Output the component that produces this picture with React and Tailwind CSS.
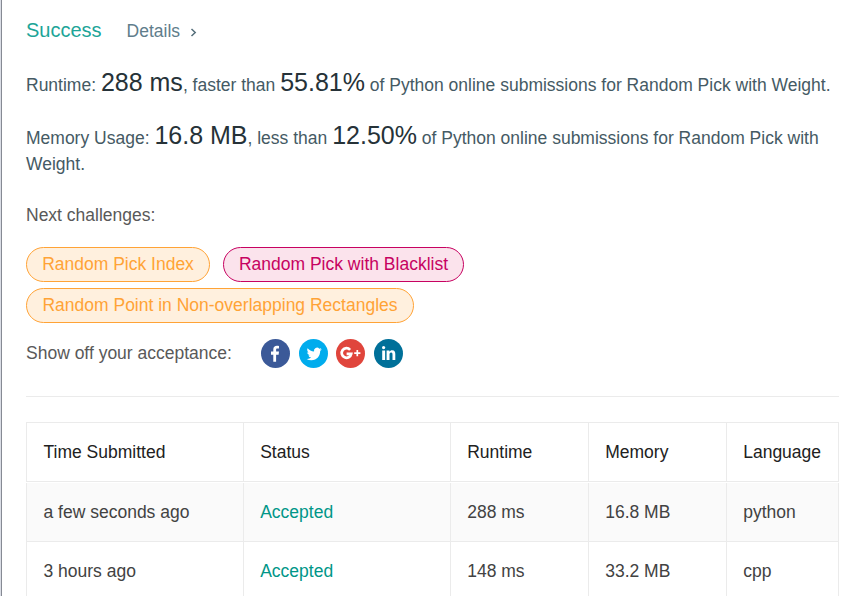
const challenges = [
  [
    { name: 'Random Pick Index', tone: 'w-[184px] border-[#ffa336] bg-[#fff0de] text-[#ffa336]' },
    { name: 'Random Pick with Blacklist', tone: 'w-[241px] border-[#c70261] bg-[#fbe3ec] text-[#c70261]' },
  ],
  [
    { name: 'Random Point in Non-overlapping Rectangles', tone: 'w-[388px] border-[#ffa336] bg-[#fff0de] text-[#ffa336]' },
  ],
];

const rows = [
  { time: 'a few seconds ago', runtime: '288 ms', memory: '16.8 MB', language: 'python', style: 'h-[59px] mt-px bg-[#fafafa]' },
  { time: '3 hours ago', runtime: '148 ms', memory: '33.2 MB', language: 'cpp', style: 'h-[58px]' },
];

const grid = 'grid grid-cols-[217px_207px_138px_138px_112px] border-l border-b border-[#ebebeb]';
const firstCell = 'flex items-center border-r border-[#ebebeb] pl-[16.5px]';
const cell = 'flex items-center border-r border-[#ebebeb] pl-[16.2px]';

function Big({ children }) {
  return <span className="text-[25px] leading-none text-[#263238]">{children}</span>;
}

function SocialIcons() {
  return (
    <div className="ml-[29px] flex items-center">
      <svg className="h-[29px] w-[29px]" viewBox="0 0 29 29">
        <circle cx="14.5" cy="14.5" r="14.5" fill="#3b5998" />
        <path fill="#fff" d="M12.3 22.8v-7.1h-2.3v-3.1h2.3v-2.2c0-2.3 1.4-3.6 3.6-3.6 1 0 1.9.1 2.1.2v2.6h-1.5c-1.1 0-1.4.5-1.4 1.3v1.7h2.9l-.4 3.1h-2.5v7.1z" />
      </svg>
      <svg className="ml-[9px] h-[29px] w-[29px]" viewBox="0 0 29 29">
        <circle cx="14.5" cy="14.5" r="14.5" fill="#00aced" />
        <path fill="#fff" transform="translate(7.6 7.2) scale(.63 .65)" d="M23.953 4.57a10 10 0 0 1-2.825.775 4.958 4.958 0 0 0 2.163-2.723c-.951.555-2.005.959-3.127 1.184a4.92 4.92 0 0 0-8.384 4.482C7.69 8.095 4.067 6.13 1.64 3.162a4.822 4.822 0 0 0-.666 2.475c0 1.71.87 3.213 2.188 4.096a4.904 4.904 0 0 1-2.228-.616v.06a4.923 4.923 0 0 0 3.946 4.827 4.996 4.996 0 0 1-2.212.085 4.936 4.936 0 0 0 4.604 3.417 9.867 9.867 0 0 1-6.102 2.105c-.39 0-.779-.023-1.17-.067a13.995 13.995 0 0 0 7.557 2.209c9.053 0 13.998-7.496 13.998-13.985 0-.21 0-.42-.015-.63A9.935 9.935 0 0 0 24 4.59z" />
      </svg>
      <svg className="ml-[8px] h-[29px] w-[29px]" viewBox="0 0 29 29">
        <circle cx="14.5" cy="14.5" r="14.5" fill="#e0453c" />
        <path fill="none" stroke="#fff" strokeWidth="2.7" d="M14.1 10.8a4.8 4.8 0 1 0 1.1 4.1h-4.6" />
        <path stroke="#fff" strokeWidth="1.7" d="M21.3 11v6.2M18.2 14.1h6.2" />
      </svg>
      <svg className="ml-[9px] h-[29px] w-[29px]" viewBox="0 0 29 29">
        <circle cx="14.5" cy="14.5" r="14.5" fill="#007099" />
        <circle cx="9.6" cy="8.6" r="1.6" fill="#fff" />
        <path fill="#fff" d="M8.2 11.4h2.9V21H8.2zM12.6 11.4h2.8v1.3c.5-.9 1.5-1.5 2.8-1.5 2.6 0 3.1 1.7 3.1 4V21h-2.8v-5.2c0-1.2 0-2.3-1.4-2.3s-1.6 1.1-1.6 2.3V21h-2.9z" />
      </svg>
    </div>
  );
}

export default function App() {
  return (
    <div className="flex h-[596px] w-[864px] overflow-hidden bg-white font-['Liberation_Sans',Arial,sans-serif] text-[17.5px] leading-[26px] text-[#455a64]">
      <div className="w-[2px] shrink-0 border-r border-[#868a94] bg-[#dadde5]" />
      <main className="ml-[24px] w-[813px] shrink-0">
        <div className="flex h-[26px] items-baseline pt-[17px]">
          <h1 className="text-[20px] text-[#1da598]">Success</h1>
          <a className="ml-[25px] flex items-center text-[#607d8b]">
            Details
            <svg className="mt-[3px] ml-[10px] h-[9px] w-[7px]" viewBox="0 0 7 9" fill="none" stroke="#546e7a" strokeWidth="1.5">
              <path d="M1.5 1 5.2 4.5 1.5 8" />
            </svg>
          </a>
        </div>
        <p className="mt-[44px] whitespace-nowrap">
          Runtime: <Big>288 ms</Big>, faster than <Big>55.81%</Big> of Python online submissions for Random Pick with Weight.
        </p>
        <p className="mt-[25px]">
          Memory Usage: <Big>16.8 MB</Big>, less than <Big>12.50%</Big> of Python online submissions for Random Pick with Weight.
        </p>
        <p className="mt-[25px] text-[#595959]">Next challenges:</p>
        <div className="mt-[19px] flex flex-col gap-[6px]">
          {challenges.map((line) => (
            <div key={line[0].name} className="flex gap-[13px]">
              {line.map((c) => (
                <a key={c.name} className={`flex h-[35px] items-center justify-center rounded-full border pb-[2px] whitespace-nowrap ${c.tone}`}>
                  {c.name}
                </a>
              ))}
            </div>
          ))}
        </div>
        <div className="mt-[16px] flex h-[29px] items-center text-[#595959]">
          <span className="pb-[2px]">Show off your acceptance:</span>
          <SocialIcons />
        </div>
        <hr className="mt-[28px] border-[#ebebeb]" />
        <div className="mt-[25px] text-[#424242]">
          <div className={`${grid} h-[60px] border-t text-[#212121]`}>
            <div className={firstCell}>Time Submitted</div>
            <div className={cell}>Status</div>
            <div className={cell}>Runtime</div>
            <div className={cell}>Memory</div>
            <div className={cell}>Language</div>
          </div>
          {rows.map((r) => (
            <div key={r.time} className={`${grid} ${r.style}`}>
              <div className={firstCell}>{r.time}</div>
              <div className={`${cell} text-[#009688]`}>Accepted</div>
              <div className={cell}>{r.runtime}</div>
              <div className={cell}>{r.memory}</div>
              <div className={cell}>{r.language}</div>
            </div>
          ))}
        </div>
      </main>
    </div>
  );
}
